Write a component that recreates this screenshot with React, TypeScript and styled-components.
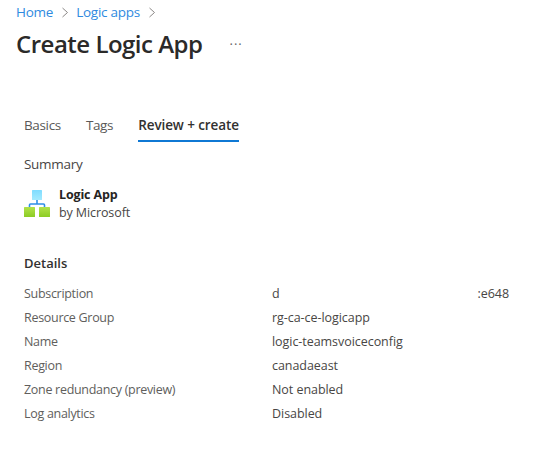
import React from 'react';
import styled, { createGlobalStyle } from 'styled-components';

const GlobalStyle = createGlobalStyle`
  html, body {
    margin: 0;
    padding: 0;
    background: #fff;
    font-family: 'Open Sans', 'Noto Sans', sans-serif;
  }
`;

const Page = styled.div`
  width: 555px;
  height: 449px;
  box-sizing: border-box;
  padding: 3px 0 0 16px;
  overflow: hidden;
  color: #323130;
`;
const Breadcrumb = styled.nav`
  display: flex;
  align-items: center;
  height: 18px;
  font-size: 13.5px;
  letter-spacing: -0.25px;
  color: #2f8ae0;
  gap: 8.5px;
`;
const Title = styled.div`
  display: flex;
  align-items: center;
  margin-top: 8px;
  height: 28px;
`;
const Heading = styled.h1`
  margin: 0;
  font-size: 24px;
  font-weight: 600;
  letter-spacing: -0.5px;
  color: #2b2a29;
`;
const More = styled.span`
  margin-left: 27px;
  font-size: 13px;
  letter-spacing: 1px;
  color: #666;
  position: relative;
  top: 1px;
`;
const Tabs = styled.div`
  display: flex;
  margin: 56px 0 0 8px;
  gap: 25px;
`;
const Tab = styled.div<{ $active?: boolean }>`
  box-sizing: border-box;
  height: 29px;
  padding-top: 3px;
  font-size: 13.5px;
  letter-spacing: ${(p) => (p.$active ? '-0.1px' : '-0.35px')};
  line-height: 18px;
  color: ${(p) => (p.$active ? '#323130' : '#5a5958')};
  font-weight: ${(p) => (p.$active ? 600 : 400)};
  border-bottom: 2px solid ${(p) => (p.$active ? '#0f78d4' : 'transparent')};
`;
const Body = styled.div`
  padding-left: 8px;
`;
const Summary = styled.div`
  margin-top: 13px;
  font-size: 13.5px;
  letter-spacing: -0.3px;
  line-height: 18px;
  color: #484644;
`;
const Product = styled.div`
  display: flex;
  align-items: center;
  gap: 9px;
  margin-top: 13px;
`;
const ProductText = styled.div`
  display: flex;
  flex-direction: column;
`;
const ProductName = styled.div`
  font-size: 12.5px;
  font-weight: 700;
  letter-spacing: -0.15px;
  line-height: 18px;
  color: #252423;
`;
const ProductBy = styled.div`
  font-size: 12.5px;
  letter-spacing: -0.1px;
  line-height: 18px;
  color: #484644;
`;
const DetailsTitle = styled.div`
  margin-top: 32px;
  font-size: 13px;
  font-weight: 600;
  letter-spacing: 0;
  line-height: 18px;
  color: #323130;
`;
const DetailsGrid = styled.div`
  display: grid;
  grid-template-columns: 248px 237px;
  grid-auto-rows: 24px;
  margin-top: 9px;
  font-size: 12.5px;
  letter-spacing: -0.3px;
  align-items: center;
`;
const Label = styled.div`
  color: #605e5c;
`;
const Value = styled.div`
  display: flex;
  justify-content: space-between;
  letter-spacing: -0.05px;
  color: #484644;
`;

const Chevron = () => (
  <svg width="6" height="11" viewBox="0 0 6 11">
    <path d="M0.5 1l5 4.5-5 4.5" fill="none" stroke="#8a8886" strokeWidth="1" />
  </svg>
);

const LogicAppIcon = () => (
  <svg width="26" height="28" viewBox="0 0 26 28">
    <defs>
      <linearGradient id="logicTop" x1="0" y1="0" x2="0" y2="1">
        <stop offset="0" stopColor="#7fdcff" />
        <stop offset="1" stopColor="#a4eafe" />
      </linearGradient>
      <linearGradient id="logicLeaf" x1="0" y1="0" x2="0" y2="1">
        <stop offset="0" stopColor="#b2e24a" />
        <stop offset="1" stopColor="#8ccc24" />
      </linearGradient>
    </defs>
    <path d="M13 10v4M5.5 17.5V15a1 1 0 0 1 1-1h13a1 1 0 0 1 1 1v2.5" fill="none" stroke="#2f8fe8" strokeWidth="1.6" />
    <rect x="8" y="0" width="10" height="10" rx="0.5" fill="url(#logicTop)" />
    <rect x="0" y="17" width="11" height="10" rx="0.5" fill="url(#logicLeaf)" />
    <rect x="15" y="17" width="11" height="10" rx="0.5" fill="url(#logicLeaf)" />
  </svg>
);

const DETAILS: [string, string, string?][] = [
  ['Subscription', 'd', ':e648'],
  ['Resource Group', 'rg-ca-ce-logicapp'],
  ['Name', 'logic-teamsvoiceconfig'],
  ['Region', 'canadaeast'],
  ['Zone redundancy (preview)', 'Not enabled'],
  ['Log analytics', 'Disabled'],
];

export default function App() {
  return (
    <Page>
      <GlobalStyle />
      <Breadcrumb>
        <span>Home</span>
        <Chevron />
        <span>Logic apps</span>
        <Chevron />
      </Breadcrumb>
      <Title>
        <Heading>Create Logic App</Heading>
        <More>···</More>
      </Title>
      <Tabs>
        <Tab>Basics</Tab>
        <Tab>Tags</Tab>
        <Tab $active>Review + create</Tab>
      </Tabs>
      <Body>
        <Summary>Summary</Summary>
        <Product>
          <LogicAppIcon />
          <ProductText>
            <ProductName>Logic App</ProductName>
            <ProductBy>by Microsoft</ProductBy>
          </ProductText>
        </Product>
        <DetailsTitle>Details</DetailsTitle>
        <DetailsGrid>
          {DETAILS.map(([label, value, tail]) => (
            <React.Fragment key={label}>
              <Label>{label}</Label>
              <Value>
                <span>{value}</span>
                {tail && <span>{tail}</span>}
              </Value>
            </React.Fragment>
          ))}
        </DetailsGrid>
      </Body>
    </Page>
  );
}
